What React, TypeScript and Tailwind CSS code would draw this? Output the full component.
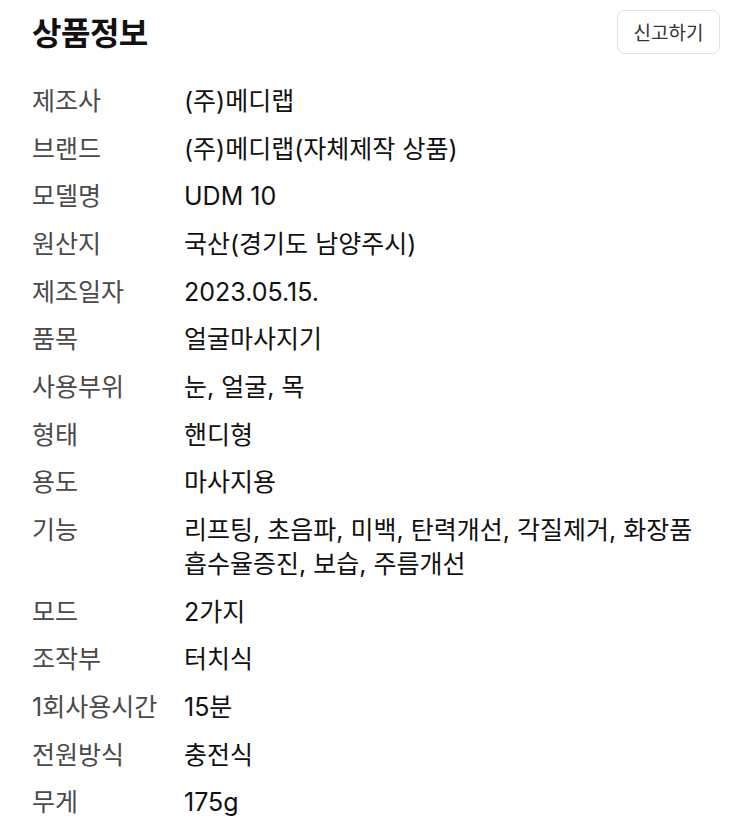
import React from "react";

const rows: [string, React.ReactNode][] = [
  ["제조사", "(주)메디랩"],
  ["브랜드", "(주)메디랩(자체제작 상품)"],
  ["모델명", "UDM 10"],
  ["원산지", "국산(경기도 남양주시)"],
  ["제조일자", "2023.05.15."],
  ["품목", "얼굴마사지기"],
  ["사용부위", "눈, 얼굴, 목"],
  ["형태", "핸디형"],
  ["용도", "마사지용"],
  [
    "기능",
    <>
      리프팅, 초음파, 미백, 탄력개선, 각질제거, 화장품
      <br />
      흡수율증진, 보습, 주름개선
    </>,
  ],
  ["모드", "2가지"],
  ["조작부", "터치식"],
  ["1회사용시간", "15분"],
  ["전원방식", "충전식"],
  ["무게", "175g"],
];

export default function App() {
  return (
    <div
      className="w-[750px] h-[832px] bg-white overflow-hidden"
      style={{ fontFamily: 'Inter, "Noto Sans CJK KR", "Noto Sans", sans-serif' }}
    >
      <div className="flex items-start justify-between pl-8 pr-[30px] pt-[10px]">
        <h1
          className="text-[32px] font-bold leading-[40px] text-[#111] mt-[1px] tracking-[-0.5px]"
          style={{ fontFamily: '"Noto Sans CJK KR", sans-serif' }}
        >
          상품정보
        </h1>
        <button
          className="h-[44px] w-[103px] rounded-[8px] border border-[#e2e2e2] text-[19px] text-[#333] bg-white"
          style={{ fontFamily: '"Noto Sans CJK KR", sans-serif' }}
        >
          신고하기
        </button>
      </div>
      <div className="mt-[23px] px-8">
        {rows.map(([k, v]) => (
          <div key={k} className="flex py-[6.85px] text-[25px] leading-[34px]">
            <div className="w-[152px] shrink-0 text-[#4a4a4a]">{k}</div>
            <div className="text-[#111]">{v}</div>
          </div>
        ))}
      </div>
    </div>
  );
}
